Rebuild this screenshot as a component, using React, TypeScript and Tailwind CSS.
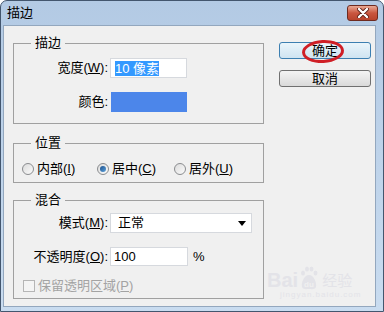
import React from 'react';

const font = "font-['Liberation_Sans','Noto_Sans_CJK_SC',sans-serif]";

function Radio({ checked, children }: { checked?: boolean; children: React.ReactNode }) {
  return (
    <div className="flex items-center gap-[3px]">
      <span className="flex items-center justify-center w-[12px] h-[12px] rounded-full border border-[#8a8c8f] bg-gradient-to-br from-[#dcdcdc] to-[#fbfbfb]">
        {checked && (
          <span className="w-[6px] h-[6px] rounded-full bg-gradient-to-br from-[#1c4f8c] to-[#5da3dc]" />
        )}
      </span>
      <span>{children}</span>
    </div>
  );
}

export default function App() {
  return (
    <div className={`relative w-[384px] h-[312px] bg-white text-[13px] leading-[16px] text-black ${font}`}>
      <div className="flex flex-col w-full h-full rounded-t-[7px] border border-[#43566e] bg-gradient-to-b from-[#b3cae4] to-[#c9dcf0]">
        {/* Title bar */}
        <div className="flex h-[24px] shrink-0">
          <span className="pl-[6px] pt-[4px]">描边</span>
          <div className="ml-auto mr-[5px] mt-[4px] w-[31px] h-[16px] rounded-[3px] border border-[#6e2b20] bg-gradient-to-b from-[#e8a995] via-[#c9563f] to-[#b8432c] flex items-center justify-center">
            <svg width="12" height="10" viewBox="0 0 12 10">
              <path d="M2 1 L10 9 M10 1 L2 9" stroke="#5a1d14" strokeWidth="4" strokeLinecap="round" />
              <path d="M2 1 L10 9 M10 1 L2 9" stroke="#ffffff" strokeWidth="2.4" strokeLinecap="round" />
            </svg>
          </div>
        </div>

        {/* Client area */}
        <div className="flex flex-1 ml-[2px] mr-[7px] mb-[4px] border border-[#93a7be] bg-[#f0f0f0]">
          <div className="flex flex-col pl-[9px] pt-[9px]">
            {/* 描边 */}
            <fieldset className="w-[251px] h-[89px] border border-[#a0a0a0]">
              <legend className="ml-[17px] px-[4px] leading-[16px]">描边</legend>
              <div className="grid grid-cols-[94px_auto] gap-x-[2px] gap-y-[14px] pt-[7px] items-center">
                <span className="text-right">
                  宽度(<u>W</u>):
                </span>
                <div className="w-[77px] h-[20px] bg-white border border-[#d6d9de] flex items-center pl-[4px]">
                  <span className="bg-[#3399ff] text-white leading-[15px]">10 像素</span>
                </div>
                <span className="text-right">颜色:</span>
                <div className="ml-[1px] w-[76px] h-[20px] bg-[#4c86ea]" />
              </div>
            </fieldset>

            {/* 位置 */}
            <fieldset className="mt-[11px] w-[251px] h-[48px] border border-[#a0a0a0]">
              <legend className="ml-[17px] px-[4px] leading-[16px]">位置</legend>
              <div className="flex items-center h-[20px] mt-[8px] pl-[8px]">
                <div className="w-[75px]">
                  <Radio>
                    内部(<u>I</u>)
                  </Radio>
                </div>
                <div className="w-[77px]">
                  <Radio checked>
                    居中(<u>C</u>)
                  </Radio>
                </div>
                <Radio>
                  居外(<u>U</u>)
                </Radio>
              </div>
            </fieldset>

            {/* 混合 */}
            <fieldset className="mt-[9px] w-[251px] h-[107px] border border-[#a0a0a0]">
              <legend className="ml-[17px] px-[4px] leading-[16px]">混合</legend>
              <div className="grid grid-cols-[94px_auto] gap-x-[2px] gap-y-[14px] pt-[5px] items-center">
                <span className="text-right">
                  模式(<u>M</u>):
                </span>
                <div className="w-[142px] h-[20px] bg-white border border-[#d6d9de] flex items-center pl-[7px] pr-[5px]">
                  <span>正常</span>
                  <svg className="ml-auto" width="8" height="5" viewBox="0 0 8 5">
                    <path d="M0 0 H8 L4 5 Z" fill="#000" />
                  </svg>
                </div>
                <span className="text-right">
                  不透明度(<u>O</u>):
                </span>
                <div className="flex items-center">
                  <div className="w-[78px] h-[19px] bg-white border border-[#d6d9de] flex items-center pl-[3px]">100</div>
                  <span className="ml-[5px]">%</span>
                </div>
              </div>
              <div className="flex items-center gap-[3px] mt-[12px] pl-[9px] text-[#a3a3a3]">
                <span className="w-[12px] h-[12px] border border-[#b5b5b5] bg-[#f4f4f4]" />
                <span>
                  保留透明区域(<u>P</u>)
                </span>
              </div>
            </fieldset>
          </div>

          {/* Buttons */}
          <div className="flex flex-col ml-[15px] pt-[16px] gap-[11px]">
            <div className="relative">
              <div className="w-[92px] h-[17px] rounded-[3px] border border-[#3c7fb1] bg-gradient-to-b from-[#eaf5fb] to-[#cfe4f1] flex items-center justify-center">
                确定
              </div>
              <div className="absolute left-[23px] top-[-2px] w-[42px] h-[23px] rounded-[50%] border-[3px] border-[#cf1f26] -rotate-3" />
            </div>
            <div className="w-[92px] h-[17px] rounded-[3px] border border-[#707070] bg-gradient-to-b from-[#f4f4f4] to-[#dadada] flex items-center justify-center">
              取消
            </div>
          </div>
        </div>
      </div>

      {/* Watermark */}
      <div className="absolute left-[267px] top-[266px] flex flex-col text-[#e3e3e8] pointer-events-none">
        <div className="flex items-end">
          <span className="text-[20px] leading-[20px] font-bold">Bai</span>
          <svg className="ml-[2px]" width="18" height="24" viewBox="0 0 18 24">
            <ellipse cx="3" cy="7" rx="2" ry="2.6" fill="#e3e3e8" />
            <ellipse cx="7" cy="3" rx="2" ry="2.6" fill="#e3e3e8" />
            <ellipse cx="11.5" cy="3" rx="2" ry="2.6" fill="#e3e3e8" />
            <ellipse cx="15.5" cy="7" rx="2" ry="2.6" fill="#e3e3e8" />
            <path d="M9 9 C4 9 1 17 2 21 C3 24 7 23 9 23 C11 23 15 24 16 21 C17 17 14 9 9 9 Z" fill="#e3e3e8" />
            <text x="9" y="21" textAnchor="middle" fontSize="8" fontWeight="bold" fill="#f0f0f0" fontFamily="Liberation Sans">du</text>
          </svg>
          <span className="ml-[4px] text-[15px] leading-[18px]">经验</span>
        </div>
        <span className="ml-[13px] text-[8px] leading-[10px] tracking-[1px]">jingyan.baidu.com</span>
      </div>
    </div>
  );
}
